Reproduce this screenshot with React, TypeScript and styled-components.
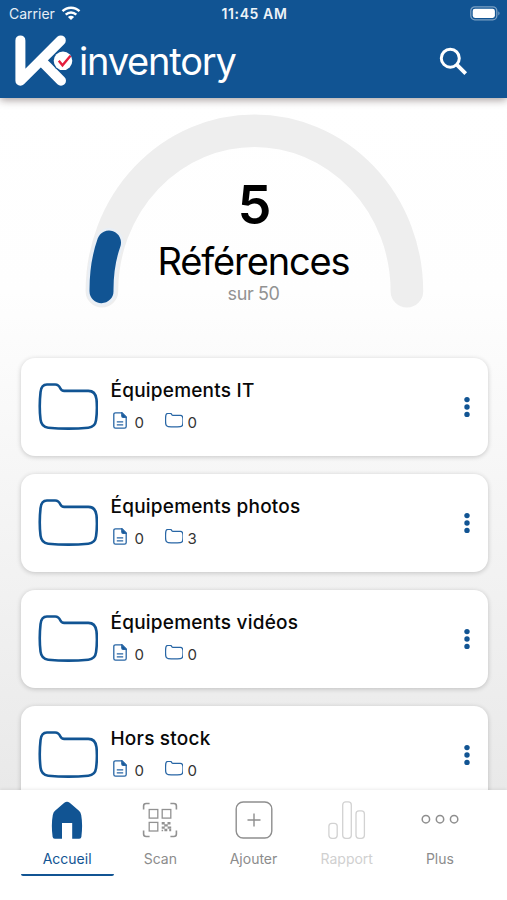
import React from 'react';
import styled, { createGlobalStyle } from 'styled-components';

const BLUE = '#115493';

const GlobalStyle = createGlobalStyle`
  * { box-sizing: border-box; }
  body { margin: 0; background: #fff; font-family: Inter, "Liberation Sans", sans-serif; }
`;

const Screen = styled.div`
  display: flex;
  flex-direction: column;
  width: 507px;
  height: 900px;
  overflow: hidden;
`;

const TopArea = styled.header`
  position: relative;
  z-index: 1;
  flex: none;
  height: 97.5px;
  color: #fff;
  background: ${BLUE};
  box-shadow: 0 2px 8px rgba(40, 20, 20, 0.42);
`;

const StatusBar = styled.div`
  display: grid;
  grid-template-columns: 1fr auto 1fr;
  align-items: center;
  height: 27px;
  padding: 0 7px 0 9px;
  font-size: 14px;
  line-height: 27px;
`;

const Carrier = styled.div`
  display: flex;
  align-items: center;
  gap: 6px;
  color: #e6eef6;
`;

const Clock = styled.div`
  font-weight: 600;
  letter-spacing: 0.6px;
  color: #edf3f8;
`;

const BatterySlot = styled.div`
  display: flex;
  justify-content: flex-end;
`;

const TitleBar = styled.div`
  display: flex;
  align-items: center;
  justify-content: space-between;
  height: 68px;
  padding: 0 39px 0 15px;
`;

const Brand = styled.div`
  display: flex;
  align-items: center;
  gap: 5px;
`;

const BrandName = styled.span`
  font-size: 38px;
  line-height: 46px;
  letter-spacing: -1.2px;
`;

const Content = styled.main`
  flex: 1;
  min-height: 0;
  overflow: hidden;
  background: linear-gradient(180deg, #fff 0%, #fefefe 28%, #f5f5f5 58%, #e9e9e9 100%);
`;

const Gauge = styled.section`
  display: grid;
  justify-items: center;
  height: 260px;
  > * { grid-area: 1 / 1; }
`;

const GaugeText = styled.div`
  display: flex;
  flex-direction: column;
  align-items: center;
  padding-top: 77px;
`;

const Count = styled.div`
  font-size: 54px;
  font-weight: 600;
  line-height: 60px;
  padding-left: 2px;
`;

const CountLabel = styled.div`
  font-size: 38px;
  line-height: 46px;
  margin-top: 3px;
  letter-spacing: -1.15px;
`;

const CountLimit = styled.div`
  font-size: 18px;
  line-height: 20px;
  letter-spacing: -0.4px;
  color: #929292;
`;

const CardList = styled.div`
  display: flex;
  flex-direction: column;
  gap: 18px;
  padding: 0 19.5px 0 20.5px;
`;

const Card = styled.article`
  display: flex;
  align-items: center;
  flex: none;
  height: 98px;
  padding: 0 16.5px 0 17px;
  background: #fff;
  border-radius: 14px;
  box-shadow: 0 1px 5px rgba(0, 0, 0, 0.2);
`;

const CardBody = styled.div`
  flex: 1;
  padding: 2px 0 0 12.5px;
`;

const CardTitle = styled.h2`
  margin: 0;
  font-size: 19px;
  font-weight: 500;
  line-height: 30px;
  letter-spacing: 0.22px;
  color: #080808;
`;

const CardStats = styled.div`
  display: flex;
  align-items: center;
  height: 34px;
  padding-left: 2.5px;
`;

const Stat = styled.div<{ $width: number; $gap: number }>`
  display: flex;
  align-items: center;
  gap: ${(p) => p.$gap}px;
  width: ${(p) => p.$width}px;
  font-size: 15px;
  line-height: 20px;
  color: #333;
  > svg { margin-bottom: 4px; }
  > span { padding-top: 1.5px; }
`;

const TabBar = styled.nav`
  position: relative;
  z-index: 1;
  flex: none;
  display: flex;
  height: 110.5px;
  padding: 0 20.5px;
  background: #fff;
  box-shadow: 0 -1px 3px rgba(0, 0, 0, 0.08);
`;

const Tab = styled.div<{ $tone: string; $active?: boolean }>`
  display: flex;
  flex: 1;
  flex-direction: column;
  align-items: center;
  height: 86px;
  padding-top: 11px;
  border-bottom: 2.5px solid ${(p) => (p.$active ? BLUE : 'transparent')};
  border-radius: 2px;
  color: ${(p) => p.$tone};
  font-size: 14px;
  line-height: 20px;
  > span { margin-top: 10.5px; }
`;

const Wifi = () => (
  <svg width="20" height="15" viewBox="0 0 20 15" fill="none" stroke="#fff" strokeWidth="2.4">
    <path d="M1.5 5.2C6.2.6 13.8.6 18.5 5.2" />
    <path d="M4.7 8.6c3-2.9 7.6-2.9 10.6 0" />
    <path d="M10 14 6.9 10.9c1.8-1.6 4.4-1.6 6.2 0Z" fill="#fff" stroke="none" />
  </svg>
);

const Battery = () => (
  <svg width="30" height="15" viewBox="0 0 30 15">
    <rect x="0.8" y="0.8" width="26" height="13" rx="4" fill="none" stroke="#7ba0c4" strokeWidth="1.3" />
    <rect x="2.7" y="2.7" width="22.2" height="9.2" rx="2.3" fill="#fff" />
    <path d="M28.3 5.2c1.7.8 1.7 3.4 0 4.2Z" fill="#7ba0c4" />
  </svg>
);

const Logo = () => (
  <svg width="59" height="54" viewBox="0 0 59 54" fill="none">
    <g stroke="#fff" strokeWidth="10" strokeLinecap="round" strokeLinejoin="round">
      <path d="M5.4 6.4v40.4L45.8 6.4" />
      <path d="M27.5 28 46 46.8" />
    </g>
    <circle cx="48" cy="26.8" r="10.5" fill={BLUE} />
    <circle cx="48" cy="26.8" r="9.3" fill="#fff" />
    <path d="m43.8 26.8 3.7 4.5 8-9.5" stroke="#e41e3d" strokeWidth="2.4" />
  </svg>
);

const Search = () => (
  <svg width="29" height="29" viewBox="0 0 29 29" fill="none" stroke="#fff">
    <circle cx="11.3" cy="11.2" r="9" strokeWidth="3" />
    <path d="m17.7 17.7 9 9" strokeWidth="3.8" />
  </svg>
);

const Arc = () => (
  <svg width="346" height="260" viewBox="81 97.8 346 260" fill="none" strokeLinecap="round">
    <path d="M101.9 291A152.5 160.5 0 0 1 406.9 291" stroke="#eee" strokeWidth="32.6" />
    <path d="M101.5 291Q101.3 264 109 242.4" stroke="#e9eff6" strokeWidth="29" />
    <path d="M101.5 291Q101.3 264 109 242.4" stroke={BLUE} strokeWidth="24" />
  </svg>
);

const FOLDER =
  'M8.8 1.5H17C20 1.5 21.3 3.5 22.2 5.5Q23.2 7.8 26 7.8H50C55.4 7.8 57.4 10.7 58.1 16C58.9 23.5 58.7 29.5 57.7 37C57.1 41.8 54.8 44 50 44.5Q30 46.3 10 44.5C5 44 3 41.4 2.4 36.5C1.2 26.5 1.3 19 2.4 9C2.9 4.2 4.6 1.5 8.8 1.5Z';

const Folder = ({ width, stroke, color = BLUE }: { width: number; stroke: number; color?: string }) => (
  <svg width={width} height={width * 0.78} viewBox="0 0 60 47" fill="none">
    <path d={FOLDER} stroke={color} strokeWidth={stroke} strokeLinejoin="round" />
  </svg>
);

const Doc = () => (
  <svg width="14" height="17" viewBox="0 0 14 17" fill="none" stroke="#2866a5" strokeWidth="1.3">
    <path d="M9 .8H2.5Q.8.8.8 2.5v12Q.8 16.2 2.5 16.2h9q1.7 0 1.7-1.7V5Z" />
    <path d="M8.8.8v3.1q0 1.5 1.5 1.5h3Z" fill={BLUE} />
    <path d="M3.8 9.8h6.4M3.8 12.9h6.4" />
  </svg>
);

const Dots = () => (
  <svg width="8" height="22" viewBox="0 0 8 22" fill={BLUE}>
    <circle cx="4" cy="3.6" r="2.7" />
    <circle cx="4" cy="11" r="2.7" />
    <circle cx="4" cy="18.4" r="2.7" />
  </svg>
);

const Home = () => (
  <svg width="38" height="38" viewBox="0 0 38 38">
    <path
      d="M16.3 1.8q2.7-2.1 5.4 0L31 9.7q1.7 1.5 2.2 4.2 1.7 9.5.2 21.8-.2 2.1-2.2 2.1h-7V22.1H14v15.7H6.8q-2 0-2.2-2.1Q3 23.4 4.8 13.9 5.3 11.2 7 9.7Z"
      fill={BLUE}
    />
  </svg>
);

const Scan = () => (
  <svg width="38" height="38" viewBox="0 0 38 38" fill="none" stroke="#929292" strokeWidth="1.3">
    <path d="M2.6 8.5V5q0-2.5 2.5-2.5h3.5M29.4 2.5h3.5q2.5 0 2.5 2.5v3.5M2.6 29.5V33q0 2.5 2.5 2.5h3.5M29.4 35.5h3.5q2.5 0 2.5-2.5v-3.5" strokeWidth="1.6" />
    <rect x="8.2" y="8.5" width="8.6" height="8.6" />
    <rect x="21.2" y="8.5" width="8.6" height="8.6" />
    <rect x="8.2" y="21.4" width="8.6" height="8.6" />
    <g fill="#929292" stroke="none">
      <path d="M20.7 21h3v2.4h-3zM26.5 21h3v2.4h-3zM23.3 23.2h3.4v2.3h-3.4zM20.7 25.4h3v2.3h-3zM26.6 25.4h3.6v2.3h-3.6zM23.4 27.7h2.9v2.6h-2.9zM20.6 28.7h1.5v1.6h-1.5zM28.2 28h2v2.3h-2z" />
    </g>
  </svg>
);

const Add = () => (
  <svg width="38" height="38" viewBox="0 0 38 38" fill="none" stroke="#8e8e8e" strokeWidth="1.4">
    <rect x="1.2" y="1" width="35.6" height="36" rx="7" />
    <path d="M19 12.5v13M12.5 19h13" />
  </svg>
);

const Report = () => (
  <svg width="38" height="38" viewBox="0 0 38 38" fill="none" stroke="#d2d2d2" strokeWidth="1.3">
    <rect x="0.9" y="22.3" width="8.3" height="15" rx="3" />
    <rect x="14.7" y="0.9" width="8.6" height="36.4" rx="3" />
    <rect x="28" y="9.9" width="8.4" height="27.4" rx="3" />
  </svg>
);

const More = () => (
  <svg width="38" height="38" viewBox="0 0 38 38" fill="none" stroke="#8e8e8e" strokeWidth="1.5">
    <circle cx="4.9" cy="18.2" r="3.7" />
    <circle cx="19" cy="18.2" r="3.7" />
    <circle cx="33.1" cy="18.2" r="3.7" />
  </svg>
);

const folders = [
  { name: 'Équipements IT', docs: 0, children: 0 },
  { name: 'Équipements photos', docs: 0, children: 3 },
  { name: 'Équipements vidéos', docs: 0, children: 0 },
  { name: 'Hors stock', docs: 0, children: 0 },
];

const tabs = [
  { label: 'Accueil', icon: <Home />, tone: BLUE, active: true },
  { label: 'Scan', icon: <Scan />, tone: '#8c8c8c' },
  { label: 'Ajouter', icon: <Add />, tone: '#8c8c8c' },
  { label: 'Rapport', icon: <Report />, tone: '#d0d0d0' },
  { label: 'Plus', icon: <More />, tone: '#8c8c8c' },
];

export default function App() {
  return (
    <Screen>
      <GlobalStyle />
      <TopArea>
        <StatusBar>
          <Carrier>Carrier <Wifi /></Carrier>
          <Clock>11:45 AM</Clock>
          <BatterySlot><Battery /></BatterySlot>
        </StatusBar>
        <TitleBar>
          <Brand>
            <Logo />
            <BrandName>inventory</BrandName>
          </Brand>
          <Search />
        </TitleBar>
      </TopArea>
      <Content>
        <Gauge>
          <Arc />
          <GaugeText>
            <Count>5</Count>
            <CountLabel>Références</CountLabel>
            <CountLimit>sur 50</CountLimit>
          </GaugeText>
        </Gauge>
        <CardList>
          {folders.map((f) => (
            <Card key={f.name}>
              <Folder width={60.5} stroke={2.6} />
              <CardBody>
                <CardTitle>{f.name}</CardTitle>
                <CardStats>
                  <Stat $width={51.5} $gap={7.5}><Doc /><span>{f.docs}</span></Stat>
                  <Stat $width={40} $gap={4.5}><Folder width={18.5} stroke={4.2} color="#2866a5" /><span>{f.children}</span></Stat>
                </CardStats>
              </CardBody>
              <Dots />
            </Card>
          ))}
        </CardList>
      </Content>
      <TabBar>
        {tabs.map((t) => (
          <Tab key={t.label} $tone={t.tone} $active={t.active}>
            {t.icon}
            <span>{t.label}</span>
          </Tab>
        ))}
      </TabBar>
    </Screen>
  );
}
